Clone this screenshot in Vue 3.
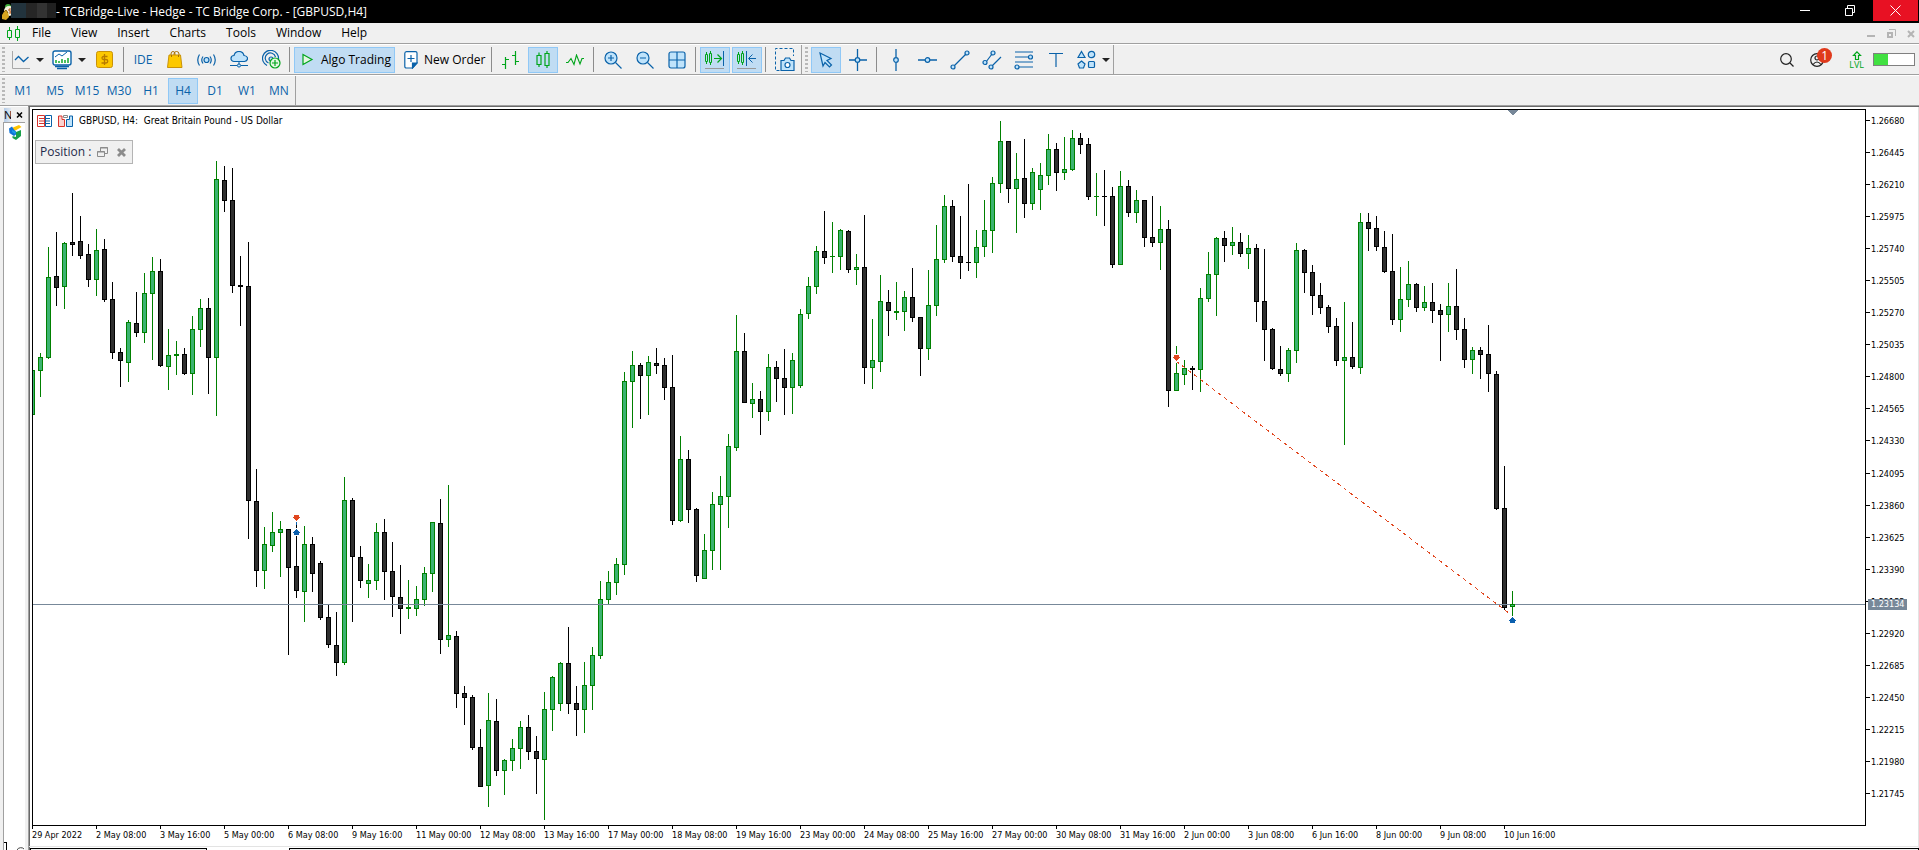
<script setup>
const menus = ['File', 'View', 'Insert', 'Charts', 'Tools', 'Window', 'Help']
const periods = ['M1', 'M5', 'M15', 'M30', 'H1', 'H4', 'D1', 'W1', 'MN']
const activePeriod = 'H4'

const prices = Array.from({ length: 22 }, (_, i) => ((126680 - i * 235) / 100000).toFixed(5))
const times = [
  '29 Apr 2022', '2 May 08:00', '3 May 16:00', '5 May 00:00', '6 May 08:00', '9 May 16:00',
  '11 May 00:00', '12 May 08:00', '13 May 16:00', '17 May 00:00', '18 May 08:00', '19 May 16:00',
  '23 May 00:00', '24 May 08:00', '25 May 16:00', '27 May 00:00', '30 May 08:00', '31 May 16:00',
  '2 Jun 00:00', '3 Jun 08:00', '6 Jun 16:00', '8 Jun 00:00', '9 Jun 08:00', '10 Jun 16:00',
]

// One entry per bar: direction, wick top, body top, body bottom, wick bottom
const series = `
U370,370,415,415 U353,357,371,397 U247,277,358,359 D232,276,288,306 U242,243,287,309 D193,242,245,256
D216,241,256,259 D244,254,280,287 U229,250,280,296 D239,249,300,302 D282,299,353,359 D348,352,361,387
U320,322,363,382 D292,323,333,337 U273,293,333,343 U257,271,294,360 D259,271,366,367 U329,355,367,390
U341,354,356,375 D348,354,374,375 U316,329,374,395 U299,308,330,347 D298,308,358,394 U161,179,358,416
D166,180,201,212 D168,200,286,293 D256,285,287,326 D242,286,501,539 D469,501,571,587 U527,544,571,589
U512,532,546,552 U521,529,533,577 D529,529,568,655 D536,566,591,598 U526,544,592,622 D537,544,574,592
D561,563,618,620 D605,617,645,648 D612,645,663,676 U477,500,663,665 D498,500,557,622 D546,557,581,588
U564,580,584,598 U523,532,581,590 D519,532,572,600 D542,571,597,617 D565,597,609,634 U580,607,609,619
U586,599,609,616 U567,573,600,606 U522,522,574,592 D499,523,640,654 U485,635,640,647 D631,636,694,708
D686,693,698,725 D695,697,748,750 D729,747,787,787 U693,720,786,807 D699,721,771,776 U759,760,771,795
U739,748,761,771 U721,727,749,769 D715,727,752,760 D736,751,759,794 U692,709,760,820 U676,677,710,731
U662,663,704,711 D627,663,704,714 D686,703,710,736 U662,685,710,733 U647,655,686,710 U581,599,656,659
U571,582,600,604 U558,564,583,595 U372,381,565,575 U351,365,382,428 D363,365,376,419 U356,362,376,415
D348,363,366,374 D358,365,388,400 D355,387,521,525 U436,459,521,522 D450,459,510,523 D508,509,576,582
U534,550,579,579 U492,504,551,570 U476,496,505,570 U434,446,497,528 U315,351,448,451 D333,351,403,403
U383,399,404,418 D391,399,412,435 U354,367,412,421 D361,367,379,402 D349,378,388,415 U353,360,388,414
U309,314,386,388 U277,286,314,319 U246,251,287,294 D211,251,258,264 U222,256,257,273 U229,230,257,270
D230,231,270,273 U254,267,270,285 D215,267,368,384 U319,360,368,389 U275,301,362,372 D290,302,311,336
U282,311,313,320 U291,297,312,331 D268,297,318,322 D317,317,349,376 U270,305,349,360 U225,259,306,316
U195,206,260,263 D200,206,257,262 D216,256,263,279 D184,262,263,271 U230,247,263,278 U200,230,247,257
U177,183,231,253 U121,141,184,193 D141,141,189,203 U153,179,189,233 D139,178,204,218 U168,172,204,210
U163,175,190,210 U134,149,176,185 D143,149,173,191 U137,169,173,180 U130,138,170,171 D133,138,145,154
D138,144,197,200 U173,196,197,216 D170,196,197,226 D187,196,265,268 U171,186,265,265 D180,186,213,217
U190,200,213,223 D200,200,238,247 D196,237,243,247 U206,229,243,270 D220,229,391,407 U346,373,391,391
U360,368,375,385 D366,368,370,390 U288,298,370,392 U252,274,299,302 U237,238,275,316 D231,238,246,262
U227,242,246,255 D233,242,254,257 U235,248,254,269 D244,248,302,322 D249,301,330,361 D328,329,369,370
D346,369,374,376 U348,350,374,382 U243,250,351,363 D249,250,273,293 D265,272,296,315 D283,295,308,314
D305,307,327,333 D318,326,361,366 U302,357,361,445 D322,357,367,369 U213,222,368,374 D213,222,229,251
D216,228,247,251 D231,247,272,273 D234,271,320,325 U267,299,320,332 U261,284,300,307 D283,284,308,312
U286,302,308,311 D283,302,311,323 D304,310,315,361 U283,306,315,332 D269,306,330,340 D318,329,360,368
U347,350,360,374 D347,350,355,379 D325,354,374,392 D371,374,509,510 D466,508,608,610 U591,604,607,616
`
const candles = series.trim().split(/\s+/).map((entry, i) => {
  const [high, top, bottom, low] = entry.slice(1).split(',').map(Number)
  return { x: 32 + i * 8, up: entry[0] === 'U', high, top, bottom, low }
})
</script>

<template>
  <div class="terminal">
    <header class="titlebar">
      <svg class="app-logo" width="11" height="17" viewBox="0 0 11 17">
        <circle cx="6" cy="4" r="3" fill="#3fae3c" />
        <circle cx="7" cy="8" r="5" fill="#f3f0dc" />
        <path d="M0 12l3-5 3 2 1 5-3 3-4-1z" fill="#d9a520" />
        <path d="M2 9l2-2 2 3" fill="none" stroke="#8a6410" />
        <path d="M9 6H7v2h2v2H7" fill="none" stroke="#c2571a" />
      </svg>
      <span class="account"><i></i><i></i><i></i><i></i></span>
      <h1>- TCBridge-Live - Hedge - TC Bridge Corp. - [GBPUSD,H4]</h1>
      <div class="window-buttons">
        <button aria-label="Minimize"><svg width="11" height="11"><path d="M0 5.500h10" stroke="#fff" /></svg></button>
        <button aria-label="Restore"><svg width="11" height="11" fill="none" stroke="#fff"><path d="M.5 3.500h7v7h-7zM2.500 3V.5h7v7H8" /></svg></button>
        <button class="close" aria-label="Close"><svg width="11" height="11"><path d="M.5.5l10 10M10.500.5l-10 10" stroke="#fff" /></svg></button>
      </div>
    </header>

    <nav class="menubar">
      <svg width="13" height="15" fill="none" stroke="#00a51b"><path d="M.5 4.500h4v7h-4zM2.500 1v3M2.500 12v2M8.500 3.500h4v8h-4zM10.500 0v3M10.500 12v3" /></svg>
      <button v-for="m in menus" :key="m">{{ m }}</button>
      <div class="mdi">
        <button aria-label="Minimize chart"><svg width="9" height="9"><path d="M0 7h8" stroke="#b4b4b4" stroke-width="2" /></svg></button>
        <button aria-label="Restore chart"><svg width="9" height="9" fill="none" stroke="#b4b4b4"><path d="M1 4h4v4H1z" stroke-width="2" /><path d="M2 .5h6.500V7" /></svg></button>
        <button aria-label="Close chart"><svg width="9" height="9"><path d="M1 2l6 6M7 2L1 8" stroke="#b4b4b4" stroke-width="2" /></svg></button>
      </div>
    </nav>

    <div class="toolbar main-tools">
      <div class="band">
        <span class="grip"></span>
        <button class="drop" aria-label="Line studies">
          <svg width="18" height="18" fill="none"><path d="M.5 0v17.500H18" stroke="#a8a8a8" /><path d="M3 9l3.500-3.500 5 5L16.500 6" stroke="#0a62a9" stroke-width="1.300" /></svg>
          <span class="caret"></span>
        </button>
        <button class="drop" aria-label="Indicators">
          <svg width="20" height="20" fill="none" stroke="#0a62a9"><rect x="1" y="1" width="18" height="14" rx="2" fill="#fff" stroke-width="1.400" /><path d="M3 7l4-3 3 2 5-4" /><path d="M4 13v-3M7 13v-2M10 13V9M13 13v-3M16 13V8" stroke="#00a51b" stroke-width="1.400" /><path d="M3 16.500h14M5 18.500h10" stroke-width="1.400" /></svg>
          <span class="caret"></span>
        </button>
        <button aria-label="Market funds">
          <svg width="18" height="18" fill="none"><rect x=".5" y=".5" width="16" height="16" rx="2" fill="#fdc800" stroke="#c99208" /><path d="M11.500 5.500H7.500a1.500 1.500 0 0 0 0 3h2.500a1.500 1.500 0 0 1 0 3.500H5.500M8.500 3v11" stroke="#b77a00" stroke-width="1.300" /></svg>
        </button>
        <span class="sep"></span>
        <button class="ide">IDE</button>
        <button aria-label="Market">
          <svg width="16" height="18" fill="none"><path d="M4 5V3q0-2.500 2-2.500T8 3v2M7 5V3q0-2.500 2.500-2.500T12 3v2" stroke="#a86f00" /><path d="M2 4h11.500l1.500 12.500H.5z" fill="#fdc800" stroke="#c99208" /><path d="M4.500 4v2M11.500 4v2" stroke="#a86f00" /></svg>
        </button>
        <button aria-label="Signals">
          <svg width="20" height="14" fill="none" stroke="#0a62a9" stroke-width="1.200"><circle cx="9.500" cy="7" r="2.500" fill="#bfe3fb" /><path d="M6 3.500q-2.500 3.500 0 7M13 3.500q2.500 3.500 0 7M2.500 1.500q-3.500 5.500 0 11M16.500 1.500q3.500 5.500 0 11" /></svg>
        </button>
        <button aria-label="Virtual hosting">
          <svg width="18" height="17" fill="none" stroke="#0a62a9"><path d="M4 10.500a3 3 0 0 1 0-6q1-4 5-4t5 4q3.500.5 3.500 3t-3 3z" fill="#bfe3fb" stroke-width="1.200" /><path d="M9 11v3M0 14.500h7M11 14.500h7" /><circle cx="9" cy="14.500" r="1.600" fill="#bfe3fb" /></svg>
        </button>
        <button aria-label="Community">
          <svg width="19" height="19" fill="none" stroke="#0a62a9" stroke-width="1.200"><path d="M5 15.500A8 8 0 1 1 16.500 9M6.500 13A5.200 5.200 0 1 1 13.500 7" /><circle cx="9" cy="9" r="2" fill="#bfe3fb" /><circle cx="13" cy="13" r="5" fill="#e4f7e2" stroke="#00a51b" /><path d="M13 10v6M10 13h6" stroke="#00a51b" /></svg>
        </button>
        <span class="sep"></span>
        <button class="on labelled algo">
          <svg width="12" height="13"><path d="M1 1.500v10l9-5z" fill="#e4f7e2" stroke="#00a51b" stroke-width="1.200" /></svg>
          Algo Trading
        </button>
        <button class="labelled order">
          <svg width="14" height="18" fill="none" stroke="#0a62a9" stroke-width="1.200"><path d="M2.500.6h9q1.500 0 1.500 1.500V12l-4.500 5h-6Q.8 17 .8 15.500v-13Q.8.6 2.500.6z" fill="#fff" /><path d="M13 12H8.500v5z" fill="#0a62a9" /><path d="M7 4v7M3.500 7.500h7" /></svg>
          New Order
        </button>
        <span class="sep"></span>
        <button aria-label="Bar chart">
          <svg width="18" height="18" fill="none" stroke="#00a51b"><path d="M3.500 6v12M0 13.500h3M4 8.500h3M13.500 0v14M10 4.500h3M14 10.500h3" stroke-width="1.200" /></svg>
        </button>
        <button class="on" aria-label="Candlesticks">
          <svg width="14" height="18" fill="none" stroke="#00a51b" stroke-width="1.200"><path d="M1 4.500h4v9H1zM3 1.500v3M3 13.500V16M9 2.500h4v12H9zM11 0v2.500M11 14.500V17" /></svg>
        </button>
        <button aria-label="Line chart">
          <svg width="18" height="12" fill="none" stroke="#00a51b" stroke-width="1.100"><path d="M0 8.500h2l3-4 3 6L10.500 1 14 10l2-5.500h2" /></svg>
        </button>
        <span class="sep"></span>
        <button aria-label="Zoom in">
          <svg width="18" height="18" fill="none" stroke="#0a62a9" stroke-width="1.200"><circle cx="7" cy="7" r="6" fill="#bfe3fb" /><path d="M11.500 11.500l6 6M7 4v6M4 7h6" /></svg>
        </button>
        <button aria-label="Zoom out">
          <svg width="18" height="18" fill="none" stroke="#0a62a9" stroke-width="1.200"><circle cx="7" cy="7" r="6" fill="#bfe3fb" /><path d="M11.500 11.500l6 6M4 7h6" /></svg>
        </button>
        <button aria-label="Tile windows">
          <svg width="18" height="18" fill="none" stroke="#0a62a9" stroke-width="1.200"><rect x="1" y="1" width="16" height="16" rx="2" fill="#bfe3fb" /><path d="M9 1v16M1 9h16" /></svg>
        </button>
        <span class="sep"></span>
        <button class="on" aria-label="Auto scroll">
          <svg width="20" height="20" fill="none" stroke="#00a51b"><path d="M.5 4.500h2v7h-2zM1.500 2v2M1.500 12v2M4.500 3.500h2v9h-2zM5.500 1v2M5.500 13v2" /><path d="M9 8.500h7M12.500 4.500l4 4-4 4" stroke-width="1.200" /><path d="M18.500 1v15" stroke="#0a62a9" /><path d="M0 18.500h19" stroke="#999" /></svg>
        </button>
        <button class="on" aria-label="Chart shift">
          <svg width="20" height="20" fill="none" stroke="#00a51b"><path d="M.5 4.500h2v7h-2zM1.500 2v2M1.500 12v2M4.500 3.500h2v9h-2zM5.500 1v2M5.500 13v2" /><path d="M9.500 1v15M12 8.500h7M15.500 4.500l-4 4 4 4" stroke="#0a62a9" /><path d="M0 18.500h19" stroke="#999" /></svg>
        </button>
        <span class="sep"></span>
        <button aria-label="Screenshot">
          <svg width="20" height="24" fill="none" stroke="#0a62a9"><path d="M4.500 22.500H.5V.5h18V8" stroke-dasharray="3 2" /><path d="M6 12.500h3l1.500-2.500h4l1.500 2.500h3v10H6z" fill="#bfe3fb" stroke-width="1.200" /><circle cx="12.500" cy="17" r="2.500" fill="#fff" stroke-width="1.200" /></svg>
        </button>
      </div>
      <div class="band">
        <span class="grip"></span>
        <button class="on" aria-label="Cursor">
          <svg width="16" height="18" fill="none"><path d="M2 2l11 5.500-4 2 4.500 4.500-2 2-4.500-4.500-2 3.500z" fill="#bfe3fb" stroke="#0a62a9" stroke-width="1.200" /></svg>
        </button>
        <button aria-label="Crosshair">
          <svg width="18" height="22" fill="none" stroke="#0a62a9"><path d="M8.500 0v8M8.500 14v8M0 11h6M11 11h7" stroke-width="1.300" /><circle cx="8.500" cy="11" r="2.300" fill="#bfe3fb" stroke-width="1.200" /></svg>
        </button>
        <span class="sep"></span>
        <button aria-label="Vertical line">
          <svg width="8" height="22" fill="none" stroke="#0a62a9"><path d="M4 0v8M4 14v8" stroke-width="1.300" /><circle cx="4" cy="11" r="2.300" fill="#bfe3fb" stroke-width="1.200" /></svg>
        </button>
        <button aria-label="Horizontal line">
          <svg width="20" height="8" fill="none" stroke="#0a62a9"><path d="M0 4h7M12 4h7" stroke-width="1.300" /><circle cx="9.500" cy="4" r="2.300" fill="#bfe3fb" stroke-width="1.200" /></svg>
        </button>
        <button aria-label="Trend line">
          <svg width="20" height="20" fill="none" stroke="#0a62a9" stroke-width="1.200"><path d="M4 16L16 4" /><circle cx="3" cy="17" r="2" fill="#bfe3fb" /><circle cx="17" cy="3" r="2" fill="#bfe3fb" /></svg>
        </button>
        <button aria-label="Channel">
          <svg width="20" height="20" fill="none" stroke="#0a62a9" stroke-width="1.200"><path d="M4 12l6-8M10 16l9-9" /><circle cx="3" cy="12.500" r="2" fill="#bfe3fb" /><circle cx="11" cy="3" r="2" fill="#bfe3fb" /><circle cx="9" cy="17" r="2" fill="#bfe3fb" /></svg>
        </button>
        <button aria-label="Fibonacci">
          <svg width="20" height="20" fill="none" stroke="#0a62a9" stroke-width="1.200"><path d="M1 2h18M1 7h13M1 12h18M5 17h14" /><circle cx="16.500" cy="7" r="2" fill="#bfe3fb" /><circle cx="3" cy="17" r="2" fill="#bfe3fb" /></svg>
        </button>
        <button aria-label="Text">
          <svg width="14" height="16" stroke="#0a62a9" stroke-width="1.200"><path d="M0 1.500h14M7 1.500V15" /></svg>
        </button>
        <button class="drop" aria-label="Objects">
          <svg width="19" height="19" fill="#bfe3fb" stroke="#0a62a9" stroke-width="1.200"><path d="M4.500 1.500l3.500 6H1z" /><circle cx="14.500" cy="4.500" r="3.200" /><path d="M4.500 11l3.500 3-1.500 4h-4L1 14z" /><rect x="11.500" y="11.500" width="6" height="6" rx="1" /></svg>
          <span class="caret"></span>
        </button>
      </div>
      <div class="status">
        <button aria-label="Search"><svg width="14" height="14" fill="none" stroke="#222" stroke-width="1.200"><circle cx="6" cy="6" r="5.300" /><path d="M10 10l3.500 3.500" /></svg></button>
        <button class="alerts" aria-label="Notifications">
          <svg width="14" height="14" fill="none" stroke="#222" stroke-width="1.200"><circle cx="7" cy="7" r="6.300" /><circle cx="7" cy="5" r="2" /><path d="M3 11.500Q7 6.500 11 11.500" /></svg>
          <b>1</b>
        </button>
        <span class="level">
          <svg width="10" height="10" fill="none" stroke="#00a51b"><path d="M5 .8L8.500 4.500H6.500v4h-3v-4h-2z" stroke-width="1.200" /></svg>
          LVL
        </span>
        <span class="meter"><i></i></span>
      </div>
    </div>

    <div class="toolbar period-tools">
      <div class="band">
        <span class="grip"></span>
        <button v-for="p in periods" :key="p" :class="{ on: p === activePeriod }">{{ p }}</button>
      </div>
    </div>

    <main class="workspace">
      <aside class="dock">
        <div class="dock-head"><b>N</b><button aria-label="Close panel"><svg width="7" height="6"><path d="M1 .5l5 5M6 .5l-5 5" stroke="#000" stroke-width="1.500" /></svg></button></div>
        <div class="dock-body">
          <svg width="13" height="15"><path d="M4 2.500L10 0l2.500 2L6.500 5.500 4 4.500z" fill="#ffc400" /><path d="M0 3.500l3-2 2 3 2 2v3L5 11 .5 8z" fill="#1073d6" /><path d="M7 7l5-2v6l-5 4-3.500-2v-2L7 12z" fill="#18a04a" /><path d="M3 5l4 2-1 2-3-2z" fill="#1d9be8" /></svg>
          <div class="dock-foot">
            <i></i>
            <svg width="7" height="3" fill="none"><path d="M0 3Q1 .8 3.500.7T7 2" stroke="#444" /></svg>
          </div>
        </div>
      </aside>

      <section class="window">
        <div class="chart">
          <div class="plot">
            <svg class="bars" shape-rendering="crispEdges">
              <g transform="translate(-33 -110)">
                <path class="shift" d="M1507 110h11l-5 5h-1z" />
                <g v-for="c in candles" :key="c.x" :class="c.up ? 'up' : 'down'">
                  <rect :x="c.x" :y="c.high" width="1" :height="c.low - c.high" />
                  <rect :x="c.x - 2" :y="c.top" width="5" :height="c.bottom - c.top" />
                  <rect v-if="c.bottom - c.top > 2" class="core" :x="c.x - 1" :y="c.top + 1" width="3" :height="c.bottom - c.top - 2" />
                </g>
                <rect class="level-line" x="33" y="604" width="100%" height="1" />
                <g class="up">
                  <rect x="1510" y="604" width="5" height="3" />
                  <rect class="core" x="1511" y="605" width="3" height="1" />
                </g>
                <path class="trade" d="M1176 361L1510 614" />
                <path class="halo" d="M296 514h1v22h-1zM1176 354h1v9h-1z" />
                <path class="sell" d="M294 515h5v2h1v1h-1v1h-1v1h-1v1h-1v-1h-1v-1h-1v-1h-1v-1h1zM1174 355h5v2h1v1h-1v1h-1v1h-1v1h-1v-1h-1v-1h-1v-1h-1v-1h1z" />
                <path class="buy" d="M296 522h1v3h-1zM296 529h1v1h1v1h1v1h1v1h-1v2h-5v-2h-1v-1h1v-1h1v-1h1zM1512 617h1v1h1v1h1v1h1v1h-1v2h-5v-2h-1v-1h1v-1h1v-1h1z" />
                <path class="down" d="M296 525h1v3h-1z" />
              </g>
            </svg>
            <div class="caption">
              <svg width="16" height="12" fill="none"><path d="M.5.5h7v11h-7z" fill="#fff" stroke="#d8342c" /><path d="M2 3.500h5M2 6h5M2 8.500h5" stroke="#d8342c" /><path d="M8.500.5h6v11h-6z" fill="#fff" stroke="#0a62a9" /><path d="M9 3.500h4M9 6h4M9 8.500h4" stroke="#0a62a9" /></svg>
              <svg width="16" height="12" fill="none"><path d="M.5 1v10.500h6v-7H4V1z" fill="#fbd3d0" stroke="#d8342c" /><path d="M14.500 1v10.500h-6v-7h3V1z" fill="#bfe3fb" stroke="#0a62a9" /><path d="M5.500.5h4v2h-4z" stroke="#888" /></svg>
              <span>GBPUSD, H4:&nbsp; Great Britain Pound - US Dollar</span>
            </div>
            <div class="panel">
              <span>Position :</span>
              <button aria-label="Expand panel"><svg width="11" height="11" fill="none" stroke="#8c8c8c"><path d="M.5 4.500h7v5h-7zM3.500 4V.5h7v6H8" /><path d="M0 5h8M3 1h8" /></svg></button>
              <button aria-label="Close position panel"><svg width="10" height="9"><path d="M1 1l7 7M8 1L1 8" stroke="#8c8c8c" stroke-width="2.800" /></svg></button>
            </div>
          </div>
          <div class="prices">
            <span v-for="p in prices" :key="p">{{ p }}</span>
            <b>1.23134</b>
          </div>
        </div>
        <div class="times"><span v-for="t in times" :key="t">{{ t }}</span></div>
        <div class="tabs"><i class="first"></i><i class="rest"></i></div>
      </section>
    </main>
  </div>
</template>

<style>
body {
  margin: 0;
  background: #f0f0f0;
}
</style>

<style scoped>
.terminal {
  display: flex;
  flex-direction: column;
  min-height: 100vh;
  overflow: hidden;
  font: 12px/16px "Open Sans", "Noto Sans", sans-serif;
  color: #000;
  background: #f0f0f0;
}
svg {
  display: block;
  flex: none;
}
button {
  display: flex;
  align-items: center;
  justify-content: center;
  box-sizing: border-box;
  padding: 0;
  border: 0;
  background: none;
  font: inherit;
  color: inherit;
}
.titlebar {
  display: flex;
  height: 23px;
  padding-left: 2px;
  background: #000;
  color: #fff;
}
.app-logo {
  margin-top: 3px;
}
.account {
  display: flex;
  height: 15px;
  margin: 3px 0 0 -2px;
}
.account i {
  width: 15px;
  background: #22333d;
}
.account i:nth-child(2) {
  width: 11px;
  background: #262626;
}
.account i:nth-child(3) {
  width: 10px;
  background: #333;
}
.account i:nth-child(4) {
  width: 9px;
  background: #202020;
}
h1 {
  margin: 4px 0 0;
  font-size: 12px;
  font-weight: 400;
  line-height: 16px;
  white-space: nowrap;
}
.window-buttons {
  display: flex;
  margin: 0 1px 0 auto;
}
.window-buttons button {
  width: 45px;
  height: 21px;
}
.window-buttons .close {
  background: #e81123;
}
.menubar {
  display: flex;
  align-items: center;
  height: 20px;
  padding: 0 3px 0 7px;
  border-bottom: 1px solid #a0a0a0;
}
.menubar > svg {
  margin-right: 2px;
}
.menubar > button {
  padding: 0 10px;
}
.mdi {
  display: flex;
  gap: 11px;
  margin-left: auto;
}
.toolbar {
  display: flex;
  height: 29px;
  border-top: 1px solid #fff;
  border-bottom: 1px solid #a0a0a0;
}
.band {
  display: flex;
  align-items: center;
  gap: 2px;
  padding-right: 1px;
  border-right: 1px solid #a0a0a0;
}
.band + .band {
  padding-left: 1px;
}
.band button {
  width: 30px;
  height: 26px;
}
.band .drop {
  gap: 6px;
  width: 39px;
  padding-left: 1px;
}
.band .on {
  border: 1px solid #90c8f6;
  background: #c0dcf3;
}
.grip {
  width: 3px;
  height: 25px;
  margin: 0 1px 0 2px;
  background: repeating-linear-gradient(#b8b8b8 0 2px, #f0f0f0 2px 4px);
}
.caret {
  border: 4px solid transparent;
  border-top-color: #222;
  border-bottom: 0;
}
.sep {
  width: 1px;
  height: 25px;
  margin: 0 2px 0 1px;
  background: #8c8c8c;
}
.ide,
.period-tools {
  color: #0a62a9;
}
.band .labelled {
  justify-content: flex-start;
  padding-left: 7px;
  white-space: nowrap;
}
.band .algo {
  gap: 7px;
  width: 101px;
}
.band .order {
  gap: 6px;
  width: 91px;
}
.status {
  display: flex;
  align-items: center;
  margin-left: auto;
  padding-right: 4px;
}
.alerts {
  position: relative;
  margin: 0 25px 0 16px;
}
.alerts b {
  position: absolute;
  top: -5px;
  left: 7px;
  width: 15px;
  height: 15px;
  border-radius: 8px;
  background: #e03a1c;
  color: #fff;
  font-size: 12px;
  font-weight: 400;
  line-height: 15px;
}
.level {
  display: flex;
  flex-direction: column;
  align-items: center;
  margin-right: 9px;
  color: #00a51b;
  font-size: 9px;
  line-height: 8px;
}
.meter {
  width: 40px;
  height: 11px;
  border: 1px solid #808080;
  background: #fff;
}
.meter i {
  display: block;
  width: 35%;
  height: 100%;
  background: #41e041;
}
.workspace {
  display: flex;
  flex: 1;
}
.dock {
  display: flex;
  flex-direction: column;
  width: 28px;
  border-top: 1px solid #fff;
  box-sizing: border-box;
}
.dock-head {
  display: flex;
  align-items: center;
  gap: 5px;
  height: 15px;
  padding-left: 4px;
}
.dock-head b {
  width: 7px;
  height: 14px;
  overflow: hidden;
  background: linear-gradient(90deg, #b4cbe6, #dfe8f2);
  font-weight: 400;
  font-size: 11px;
  line-height: 14px;
}
.dock-body {
  display: flex;
  flex: 1;
  flex-direction: column;
  justify-content: space-between;
  margin: 0 3px;
  padding: 2px 0 0 5px;
  border-top: 1px solid #a0a0a0;
  border-left: 1px solid #a0a0a0;
  background: #fff;
}
.dock-foot {
  display: flex;
  align-items: flex-end;
  gap: 10px;
  margin-left: -5px;
}
.dock-foot i {
  width: 2px;
  height: 7px;
  border: 1px solid #000;
  border-width: 1px 1px 0 0;
}
.window {
  display: flex;
  flex: 1;
  flex-direction: column;
  min-width: 0;
  border-top: 1px solid #696969;
  border-left: 1px solid #a0a0a0;
  background: #fff;
  font: 9px/12px "DejaVu Sans Condensed", "Open Sans", sans-serif;
  box-shadow: inset 1px 0 #696969, inset -1px 0 #e3e3e3;
}
.chart {
  display: flex;
  flex: 1;
  padding: 2px 0 0 3px;
}
.plot {
  position: relative;
  flex: 1;
  min-width: 0;
  border: 1px solid #000;
}
.bars {
  position: absolute;
  width: 100%;
  height: 100%;
}
.shift,
.level-line {
  fill: #778899;
}
.up {
  fill: #008000;
}
.down {
  fill: #000;
}
.up .core {
  fill: #3cb371;
}
.down .core {
  fill: #2f2f2f;
}
.trade {
  fill: none;
  stroke: #e1471f;
  stroke-dasharray: 4 3.5;
}
.halo {
  fill: #fff;
}
.sell {
  fill: #e1471f;
}
.buy {
  fill: #0a5fae;
}
.caption {
  position: relative;
  display: flex;
  align-items: center;
  gap: 5px;
  height: 21px;
  padding-left: 4px;
  font-size: 10px;
}
.panel {
  position: relative;
  display: flex;
  align-items: center;
  width: 92px;
  height: 22px;
  margin: 9px 0 0 2px;
  padding-left: 4px;
  border: 1px solid #b4b4b4;
  background: #f0f0f0;
  color: #1e2a4a;
  font: 12px/16px "Open Sans", "Noto Sans", sans-serif;
}
.panel span {
  min-width: 54px;
  white-space: nowrap;
}
.panel button {
  margin: 0 9px 0 3px;
}
.panel button + button {
  margin: 0;
}
.prices {
  position: relative;
  display: flex;
  flex-direction: column;
  justify-content: space-between;
  width: 53px;
  padding: 6px 0 26px;
}
.prices span::before {
  display: inline-block;
  width: 4px;
  height: 1px;
  margin-right: 1px;
  background: #000;
  vertical-align: 3px;
  content: "";
}
.prices b {
  position: absolute;
  top: 490px;
  left: 2px;
  padding: 0 3px;
  background: #778899;
  color: #fff;
  font-weight: 400;
  line-height: 11px;
}
.times {
  display: flex;
  height: 20px;
  padding-left: 3px;
}
.times span {
  flex: 0 0 64px;
  white-space: nowrap;
}
.times span::before {
  display: block;
  width: 1px;
  height: 3px;
  background: #000;
  content: "";
}
.tabs {
  display: flex;
  height: 2px;
  border-top: 1px solid #e3e3e3;
  padding-top: 1px;
}
.tabs i {
  border: 1px solid #000;
  border-bottom: 0;
  background: #f0f0f0;
}
.tabs .first {
  width: 175px;
  margin: 0 82px 0 1px;
}
.tabs .rest {
  flex: 1;
}
</style>
